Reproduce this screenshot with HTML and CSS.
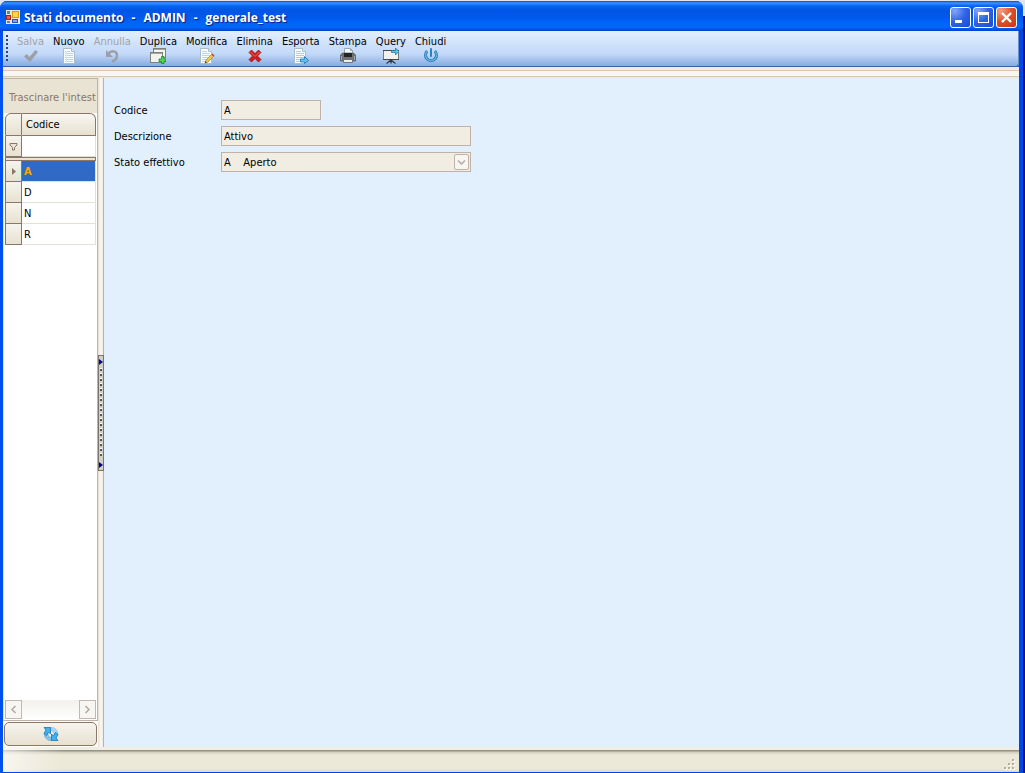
FILE: index.html
```html
<!DOCTYPE html>
<html lang="it">
<head>
  <meta charset="UTF-8" />
  <meta name="viewport" content="width=device-width, initial-scale=1" />
  <title>Stati documento - ADMIN - generale_test</title>
  <link rel="stylesheet" href="styles.css">
</head>
<body>
  <div class="window">
    <header class="titlebar">
      <svg class="app-icon" width="14" height="14" viewBox="0 0 14 14">
        <rect width="14" height="14" fill="#e9e6dc" />
        <rect x="1" y="1" width="3" height="3" fill="#5f7fc0" />
        <rect x=".5" y="5.500" width="4" height="4" fill="#e0614a" stroke="#a3251b" />
        <rect x="6.500" y="1.500" width="6" height="6" fill="#ffd257" stroke="#d99a12" />
        <rect x="1" y="11" width="3" height="2" fill="#5f7fc0" />
        <rect x="6.500" y="9.500" width="5" height="3" fill="#7fa4ea" stroke="#2d55b8" />
      </svg>
      <h1 class="title">
        <span>Stati documento</span>
        <span>-</span>
        <span>ADMIN</span>
        <span>-</span>
        <span>generale_test</span>
      </h1>
      <div class="window-buttons">
        <button type="button" class="win-btn" aria-label="Riduci a icona">
          <svg width="19" height="19" viewBox="0 0 19 19"><path d="M4 12h7v3H4z" fill="#fff" /></svg>
        </button>
        <button type="button" class="win-btn" aria-label="Ingrandisci">
          <svg width="19" height="19" viewBox="0 0 19 19"><path d="M4 4h11v11H4zM5 7v7h9V7z" fill="#fff" fill-rule="evenodd" /></svg>
        </button>
        <button type="button" class="win-btn win-close" aria-label="Chiudi finestra">
          <svg width="19" height="19" viewBox="0 0 19 19"><path d="M5 5l9 9M14 5l-9 9" stroke="#fff" stroke-width="2.4" /></svg>
        </button>
      </div>
    </header>

    <nav class="toolbar">
      <span class="gripper"></span>
      <button type="button" class="tool" disabled>Salva
        <svg width="16" height="16" viewBox="0 0 16 16"><path d="M1 8.500l2.500-2.500 3 3L12.500 2 15 4 7 14z" fill="#9c9fa5" /></svg>
      </button>
      <button type="button" class="tool">Nuovo
        <svg width="16" height="16" viewBox="0 0 16 16">
          <path d="M2.500.5h8l3 3v12h-11z" fill="#fbfdff" stroke="#a9bccb" />
          <path d="M4 3.500h5M4 5.500h8M4 7.500h8M4 9.500h8M4 11.500h8M4 13.500h8" stroke="#bfd5e6" />
          <path d="M5.500 3v11" stroke="#d2e5f2" />
          <path d="M10.500.5v3h3" fill="#e2f0f7" stroke="#a9bccb" />
        </svg>
      </button>
      <button type="button" class="tool" disabled>Annulla
        <svg width="16" height="16" viewBox="0 0 16 16">
          <path d="M4 6c3-3.500 9-4 9 1.500 0 3-2 5-5 6" fill="none" stroke="#9c9fa5" stroke-width="2.500" />
          <path d="M2 2v7h7z" fill="#9c9fa5" />
        </svg>
      </button>
      <button type="button" class="tool">Duplica
        <svg width="16" height="16" viewBox="0 0 16 16">
          <rect x="3.500" y=".5" width="12" height="9" fill="#f5f6f4" stroke="#7d8179" />
          <path d="M4 1.500h11" stroke="#a4a8a0" />
          <rect x=".5" y="4.500" width="12" height="10" fill="#f2f3f0" stroke="#7d8179" />
          <path d="M1 5.500h11" stroke="#a4a8a0" />
          <path d="M11.500 8.500h2.500v2.500h2v2.500h-2v2h-2.500v-2H9v-2.500h2.500z" fill="#4fd856" stroke="#128c22" stroke-width=".8" />
        </svg>
      </button>
      <button type="button" class="tool">Modifica
        <svg width="16" height="16" viewBox="0 0 16 16">
          <path d="M1.500.5h8l3 3v12h-11z" fill="#fbfdff" stroke="#a9bccb" />
          <path d="M3 3.500h5M3 5.500h8M3 7.500h8M3 9.500h6M3 11.500h5M3 13.500h4" stroke="#bfd5e6" />
          <path d="M9.500.5v3h3" fill="#e2f0f7" stroke="#a9bccb" />
          <path d="M6 15l1-3 5.500-5.500 2 2L9 14z" fill="#f2c750" stroke="#8a6c22" stroke-width=".6" />
          <path d="M12.500 6.500l1-1 2 2-1 1z" fill="#d64532" />
          <path d="M6 15l.6-1.800 1.200 1.200z" fill="#222" />
        </svg>
      </button>
      <button type="button" class="tool">Elimina
        <svg width="16" height="16" viewBox="0 0 16 16"><path d="M2 4.500L4.500 2 8 5.500 11.500 2 14 4.500 10.500 8 14 11.500 11.500 14 8 10.500 4.500 14 2 11.500 5.500 8z" fill="#cf1d1d" stroke="#93120f" stroke-width=".7" /><path d="M3.500 4l4.500 4.500L12.500 4" fill="none" stroke="#f06a60" /></svg>
      </button>
      <button type="button" class="tool">Esporta
        <svg width="16" height="16" viewBox="0 0 16 16">
          <path d="M1.500.5h8l3 3v12h-11z" fill="#fbfdff" stroke="#a9bccb" />
          <path d="M3 3.500h5M3 5.500h8M3 7.500h8M3 9.500h8M3 11.500h4M3 13.500h4" stroke="#b8cad9" />
          <path d="M9.500.5v3h3" fill="#e2f0f7" stroke="#a9bccb" />
          <path d="M7.500 11h4V8.500l4 4-4 3V14h-4z" fill="#62c3ee" stroke="#1770ab" stroke-width=".8" />
        </svg>
      </button>
      <button type="button" class="tool">Stampa
        <svg width="16" height="16" viewBox="0 0 16 16">
          <path d="M4.500.5h6l2 2v4h-8z" fill="#f4faff" stroke="#98a9b5" />
          <path d="M10.500.5v2h2" fill="none" stroke="#98a9b5" />
          <path d="M.5 7l2-2h11l2 2v6H.5z" fill="#6e7276" stroke="#45484b" stroke-width=".6" />
          <path d="M4 5h8v4H4z" fill="#232528" />
          <path d="M1.500 8v4M14.500 8v4" stroke="#a7abae" />
          <path d="M3.500 11.500h9v3h-9z" fill="#eef0f0" stroke="#71767a" />
        </svg>
      </button>
      <button type="button" class="tool">Query
        <svg width="16" height="16" viewBox="0 0 16 16">
          <rect x=".5" y="2.500" width="15" height="9" fill="#f1f2ef" stroke="#777b76" />
          <path d="M0 2.500h16M0 11.500h16" stroke="#43474a" />
          <path d="M8 11.500v4M8 12l-4.500 3.500M8 12l4.500 3.500" stroke="#33373a" stroke-width="1.300" />
          <path d="M8.500 2.500h4V0l3.500 3.500L12.500 7V4.500h-4z" fill="#62c3ee" stroke="#1770ab" stroke-width=".7" />
        </svg>
      </button>
      <button type="button" class="tool">Chiudi
        <svg width="16" height="16" viewBox="0 0 16 16">
          <path d="M4.200 3.200a5.500 5.500 0 1 0 7.600 0" fill="none" stroke="#2477b5" stroke-width="3" />
          <path d="M4.200 3.200a5.500 5.500 0 1 0 7.600 0" fill="none" stroke="#62afe0" stroke-width="1.500" />
          <path d="M8 1v7" stroke="#2b82c3" stroke-width="2" stroke-linecap="round" />
        </svg>
      </button>
    </nav>
    <div class="dock-line"></div>

    <main class="content">
      <aside class="sidebar">
        <div class="grid-panel">
          <div class="group-panel">Trascinare l'intest</div>
          <table class="grid">
            <thead>
              <tr>
                <th class="indicator"></th>
                <th class="col-head">Codice</th>
              </tr>
              <tr class="filter-row">
                <td class="indicator">
                  <svg width="9" height="9" viewBox="0 0 9 9"><path d="M1 1.500h7v1.500L5.500 5.500v2.500h-2V5.500L1 3z" fill="#e9e3da" stroke="#8c7668" /></svg>
                </td>
                <td><input type="text" class="filter-input" aria-label="Filtro codice" /></td>
              </tr>
              <tr class="band"><td colspan="2"></td></tr>
            </thead>
            <tbody>
              <tr class="selected">
                <td class="indicator"><svg width="9" height="9" viewBox="0 0 9 9"><path d="M3 1v7l4-3.500z" fill="#8c7668" /></svg></td>
                <td>A</td>
              </tr>
              <tr><td class="indicator"></td><td>D</td></tr>
              <tr><td class="indicator"></td><td>N</td></tr>
              <tr><td class="indicator"></td><td>R</td></tr>
            </tbody>
          </table>
          <div class="scrollbar">
            <button type="button" class="scroll-btn" aria-label="Scorri a sinistra">
              <svg width="7" height="9" viewBox="0 0 7 9"><path d="M5.500 1L2 4.500 5.500 8" fill="none" stroke="#b5a99f" stroke-width="1.500" /></svg>
            </button>
            <button type="button" class="scroll-btn" aria-label="Scorri a destra">
              <svg width="7" height="9" viewBox="0 0 7 9"><path d="M1.500 1L5 4.500 1.500 8" fill="none" stroke="#b5a99f" stroke-width="1.500" /></svg>
            </button>
          </div>
        </div>
        <button type="button" class="refresh" aria-label="Aggiorna">
          <svg width="16" height="16" viewBox="0 0 16 16">
            <path d="M7 1.500a6.500 6.500 0 0 1 7.500 8l-3.500-1a3.500 3.500 0 0 0-4-4z" fill="#a5d6f2" stroke="#78b4dc" stroke-width=".6" />
            <path d="M9 14.500a6.500 6.500 0 0 1-7.500-8l3.500 1a3.500 3.500 0 0 0 4 4z" fill="#86c4ea" stroke="#5b9fce" stroke-width=".6" />
            <path d="M1 1.500h6.500V8L5.500 6l-2 3.500-2.500-2L3 4z" fill="#3fb2f0" stroke="#1d74b8" stroke-width=".8" />
            <path d="M15 14.500H8.500V8l2 2 2-3.500 2.500 2-2 3.500z" fill="#3fb2f0" stroke="#1d74b8" stroke-width=".8" />
          </svg>
        </button>
      </aside>

      <div class="splitter">
        <div class="splitter-grip">
          <span class="grip-arrow"></span>
          <span class="grip-dots"></span>
          <span class="grip-arrow"></span>
        </div>
      </div>

      <form class="detail">
        <label for="codice">Codice</label>
        <input type="text" id="codice" class="field short" value="A" readonly />

        <label for="descrizione">Descrizione</label>
        <input type="text" id="descrizione" class="field" value="Attivo" readonly />

        <label for="stato">Stato effettivo</label>
        <div class="combo">
          <select id="stato" class="field">
            <option selected>A&nbsp;&nbsp;&nbsp;&nbsp;Aperto</option>
          </select>
          <span class="combo-arrow">
            <svg width="9" height="7" viewBox="0 0 9 7"><path d="M1 1.500L4.500 5 8 1.500" fill="none" stroke="#b5aaa2" stroke-width="1.500" /></svg>
          </span>
        </div>
      </form>
    </main>

    <footer class="statusbar">
      <svg width="12" height="12" viewBox="0 0 12 12">
        <path d="M9 1h2v2H9zM5 5h2v2H5zM9 5h2v2H9zM1 9h2v2H1zM5 9h2v2H5zM9 9h2v2H9z" fill="#fff" />
        <path d="M8 0h2v2H8zM4 4h2v2H4zM8 4h2v2H8zM0 8h2v2H0zM4 8h2v2H4zM8 8h2v2H8z" fill="#b3ae98" />
      </svg>
    </footer>
  </div>
</body>
</html>
```

FILE: styles.css
```css
* {
  box-sizing: border-box;
}
body {
  margin: 0;
  padding: 1px 2px 0 0;
  min-height: 100vh;
  display: flex;
  background: linear-gradient(#dfe4ee 16px, #00138c 16px);
  font-family: "DejaVu Sans Condensed", "Noto Sans", sans-serif;
  font-size: 11px;
  line-height: 13px;
  color: #000;
}
button, input, select {
  font: inherit;
  color: inherit;
  margin: 0;
}
svg {
  display: block;
}
.window {
  flex: 1;
  min-width: 0;
  display: flex;
  flex-direction: column;
  background: #0046e8;
  border-radius: 7px 7px 0 0;
  border: solid #0046e8;
  border-width: 0 4px 1px 3px;
  border-left-color: #0050f0;
}

/* title bar */
.titlebar {
  height: 30px;
  margin: 0 -4px 0 -3px;
  padding: 2px 6px 0;
  display: flex;
  align-items: center;
  gap: 4px;
  border-radius: 7px 7px 0 0;
  background: linear-gradient(#0a4ad0 0, #3c93ff 2px, #0a62ee 5px, #0055e5 9px, #0058ec 16px, #0068ff 24px, #0062f8 27px, #0040c8 30px);
}
.title {
  flex: 1;
  margin: 0;
  display: flex;
  gap: 8px;
  padding-top: 2px;
  font-family: "Open Sans", "Noto Sans", sans-serif;
  font-size: 12px;
  line-height: 16px;
  font-weight: 700;
  color: #fff;
  text-shadow: 1px 1px 1px #0a1c80;
  white-space: nowrap;
}
.window-buttons {
  display: flex;
  gap: 2px;
}
.win-btn {
  width: 21px;
  height: 21px;
  padding: 0;
  border: 1px solid #fff;
  border-radius: 3px;
  background: radial-gradient(circle at 20% 15%, #7fa6fa, #2f62e6 50%, #1a4bd0);
}
.win-close {
  background: radial-gradient(circle at 20% 15%, #f0a086, #dc4f28 50%, #c43a12);
}

/* toolbar */
.toolbar {
  display: flex;
  align-items: flex-start;
  gap: 9px;
  height: 36px;
  padding: 4px 3px 0 2px;
  margin-right: 1px;
  border-bottom: 1px solid #3a62a4;
  border-radius: 0 0 3px 0;
  background: linear-gradient(#e3efff, #cbdffa 45%, #c3d9f8 65%, #87abe0);
  box-shadow: 1px 0 0 #6c8fc8;
}
.gripper {
  width: 3px;
  height: 27px;
  background: linear-gradient(#27418c 2px, transparent 2px) 1px 0 / 2px 4px repeat-y;
}
.tool {
  padding: 0;
  border: none;
  background: none;
  display: flex;
  flex-direction: column;
  align-items: center;
}
.tool:disabled {
  color: #a3a3a3;
}
.dock-line {
  height: 11px;
  background: linear-gradient(#f0ede0 3px, #d8c9b0 3px, #d8c9b0 4px, #f8f6f3 4px, #f8f6f3 9px, #d8c9b0 9px, #d8c9b0 10px, #ece9d8 10px);
}

/* content */
.content {
  flex: 1;
  display: flex;
  background: #e2f0fe;
}
.sidebar {
  width: 95px;
  display: flex;
  flex-direction: column;
  background: #fff;
}
.grid-panel {
  flex: 1;
  display: flex;
  flex-direction: column;
  padding: 0 1px;
  border: 1px solid #c0b2a6;
  border-left-color: #e8e2d8;
}
.group-panel {
  height: 34px;
  margin: 0 -1px;
  padding: 12px 0 0 5px;
  background: #e9e3d3;
  color: #8c7668;
  white-space: nowrap;
}
.grid {
  width: 100%;
  table-layout: fixed;
  border-collapse: separate;
  border-spacing: 0;
}
.grid tr {
  height: 21px;
}
.grid th, .grid td {
  padding: 0 0 0 2px;
  font-weight: 400;
  text-align: left;
  border-right: 1px solid #e4e0d2;
  border-bottom: 1px solid #e4e0d2;
}
.grid th {
  height: 23px;
  border: 1px solid #8c7668;
  border-left-width: 0;
  background: linear-gradient(#f8f6f1, #e7e1d0);
}
.grid .col-head {
  padding-left: 4px;
  border-radius: 0 6px 0 0;
}
.grid .indicator {
  width: 17px;
  padding: 0 0 0 3px;
  border-left: 1px solid #8c7668;
  border-right: 1px solid #8c7668;
  border-bottom-color: #8c7668;
  background: linear-gradient(#f6f4ee, #e7e1d0);
}
.grid th.indicator {
  border-radius: 6px 0 0 0;
}
.filter-input {
  display: block;
  width: 100%;
  height: 18px;
  padding: 0;
  border: none;
  background: #fff;
}
.grid .band {
  height: 4px;
}
.grid .band td {
  height: 4px;
  padding: 0;
  border: 1px solid #8c7668;
  background: #e9e3d3;
}
.grid .selected td:last-child {
  background: #316ac5;
  color: #ffa500;
  font-weight: 700;
}
.scrollbar {
  display: flex;
  justify-content: space-between;
  height: 20px;
  margin-top: auto;
  padding-bottom: 1px;
  background: linear-gradient(#f3f1ec, #fff);
}
.scroll-btn {
  width: 17px;
  padding: 0;
  display: grid;
  place-items: center;
  border: 1px solid #c4b8ae;
  background: #f7f6f2;
}
.refresh {
  height: 24px;
  margin: 1px;
  padding: 0;
  display: grid;
  place-items: center;
  border: 1px solid #8c7668;
  border-radius: 5px;
  background: linear-gradient(#f6f4ee, #e7e1d0);
}
.splitter {
  width: 6px;
  display: flex;
  align-items: center;
  background: linear-gradient(90deg, #ece5da 1px, #f8f5ef 2px, #f8f5ef 4px, #ece5da 5px, #c0b2a6 5px);
}
.splitter-grip {
  width: 6px;
  height: 116px;
  padding: 3px 0 2px;
  display: flex;
  flex-direction: column;
  align-items: center;
  justify-content: space-between;
  border: 1px solid #77746c;
  background: #d4d0c8;
}
.grip-arrow {
  border: solid transparent;
  border-width: 3px 0 3px 4px;
  border-left-color: #000090;
}
.grip-dots {
  width: 4px;
  height: 90px;
  background: linear-gradient(#fff 1px, #555 1px, #555 3px, transparent 3px) 1px 0 / 2px 5px repeat-y;
}

/* detail form */
.detail {
  flex: 1;
  display: grid;
  grid-template-columns: 107px 250px;
  align-content: start;
  align-items: center;
  row-gap: 6px;
  padding: 22px 10px;
}
.field {
  display: block;
  width: 100%;
  height: 20px;
  padding: 0 2px;
  border: 1px solid #c0b2a6;
  border-radius: 0;
  background: #f2ede2;
  appearance: none;
  outline: none;
}
.field.short {
  width: 100px;
}
.combo {
  position: relative;
}
.combo-arrow {
  position: absolute;
  top: 2px;
  right: 2px;
  width: 15px;
  height: 16px;
  display: grid;
  place-items: center;
  border: 1px solid #c0b2a6;
  border-radius: 2px;
  background: #f7f6f2;
  pointer-events: none;
}

.statusbar {
  height: 25px;
  padding: 0 3px 1px 0;
  display: flex;
  justify-content: flex-end;
  align-items: flex-end;
  background:
    linear-gradient(90deg, rgba(255, 255, 255, 0.6), transparent 60px),
    linear-gradient(#f1eee1 3px, #96948a 3px, #96948a 4px, #d0cdbd 5px, #ece9d8 8px, #ebe8d7 22px, #dedac6);
}
```
